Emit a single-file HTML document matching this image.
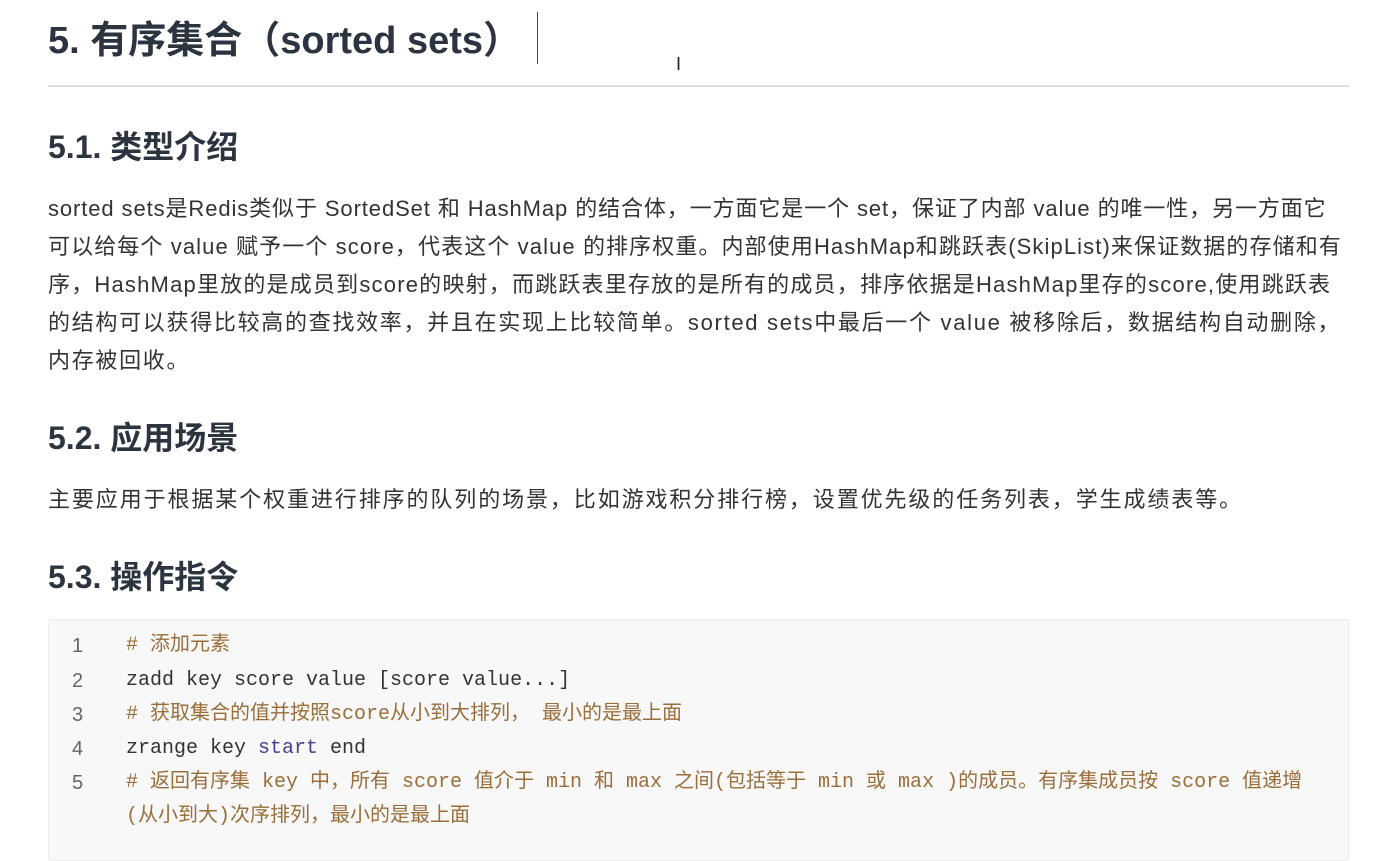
<!DOCTYPE html>
<html><head><meta charset="utf-8"><style>
body{margin:0;background:#fff;width:1392px;height:845px;overflow:hidden;font-family:"Liberation Sans","Noto Sans CJK SC",sans-serif;color:#333;}
.a{position:absolute;white-space:nowrap;}
.p{font-size:22px;line-height:26px;color:#333;}
.code{position:absolute;left:48px;top:619px;width:1299px;height:240px;background:#f8f8f8;border:1px solid #ececec;border-radius:3px;}
.ln{position:absolute;left:72px;font-family:"Liberation Sans",sans-serif;font-size:20px;line-height:24px;color:#666;}
.cl{position:absolute;left:126px;font-family:"Liberation Mono","Noto Sans CJK SC",monospace;font-size:20px;line-height:24px;color:#333;white-space:nowrap;}
.c{color:#9a6e3a;}.k{color:#4b3d8f;}
</style></head><body>
<div class="a" style="left:48px;top:16px;font-size:38px;line-height:50px;font-weight:bold;color:#2c3440;">5. 有序集合（sorted sets）</div>
<div class="a" style="left:537px;top:12px;width:1px;height:52px;background:#444;"></div>
<div class="a" style="left:676px;top:54px;font-size:18px;color:#222;">I</div>
<div class="a" style="left:48px;top:85px;width:1301px;height:2px;background:#e0e0e0;"></div>
<div class="a" style="left:48px;top:127px;font-size:32px;line-height:40px;font-weight:bold;color:#2c3440;">5.1. 类型介绍</div>
<div class="a p" style="left:48px;top:196px;letter-spacing:0.9px;">sorted sets是Redis类似于 SortedSet 和 HashMap 的结合体，一方面它是一个 set，保证了内部 value 的唯一性，另一方面它</div>
<div class="a p" style="left:48px;top:234px;letter-spacing:1.1px;">可以给每个 value 赋予一个 score，代表这个 value 的排序权重。内部使用HashMap和跳跃表(SkipList)来保证数据的存储和有</div>
<div class="a p" style="left:48px;top:272px;letter-spacing:1.2px;">序，HashMap里放的是成员到score的映射，而跳跃表里存放的是所有的成员，排序依据是HashMap里存的score,使用跳跃表</div>
<div class="a p" style="left:48px;top:310px;letter-spacing:1.7px;">的结构可以获得比较高的查找效率，并且在实现上比较简单。sorted sets中最后一个 value 被移除后，数据结构自动删除，</div>
<div class="a p" style="left:48px;top:348px;letter-spacing:1.7px;">内存被回收。</div>
<div class="a" style="left:48px;top:418px;font-size:32px;line-height:40px;font-weight:bold;color:#2c3440;">5.2. 应用场景</div>
<div class="a p" style="left:48px;top:487px;letter-spacing:1.9px;">主要应用于根据某个权重进行排序的队列的场景，比如游戏积分排行榜，设置优先级的任务列表，学生成绩表等。</div>
<div class="a" style="left:48px;top:557px;font-size:32px;line-height:40px;font-weight:bold;color:#2c3440;">5.3. 操作指令</div>
<div class="code"></div>
<div class="ln" style="top:634px">1</div><div class="cl" style="top:634px"><span class="c"># 添加元素</span></div>
<div class="ln" style="top:669px">2</div><div class="cl" style="top:669px">zadd key score value [score value...]</div>
<div class="ln" style="top:703px">3</div><div class="cl" style="top:703px"><span class="c"># 获取集合的值并按照score从小到大排列， 最小的是最上面</span></div>
<div class="ln" style="top:737px">4</div><div class="cl" style="top:737px">zrange key <span class="k">start</span> end</div>
<div class="ln" style="top:771px">5</div><div class="cl" style="top:771px"><span class="c"># 返回有序集 key 中，所有 score 值介于 min 和 max 之间(包括等于 min 或 max )的成员。有序集成员按 score 值递增</span></div>
<div class="cl" style="top:805px"><span class="c">(从小到大)次序排列，最小的是最上面</span></div>
</body></html>
